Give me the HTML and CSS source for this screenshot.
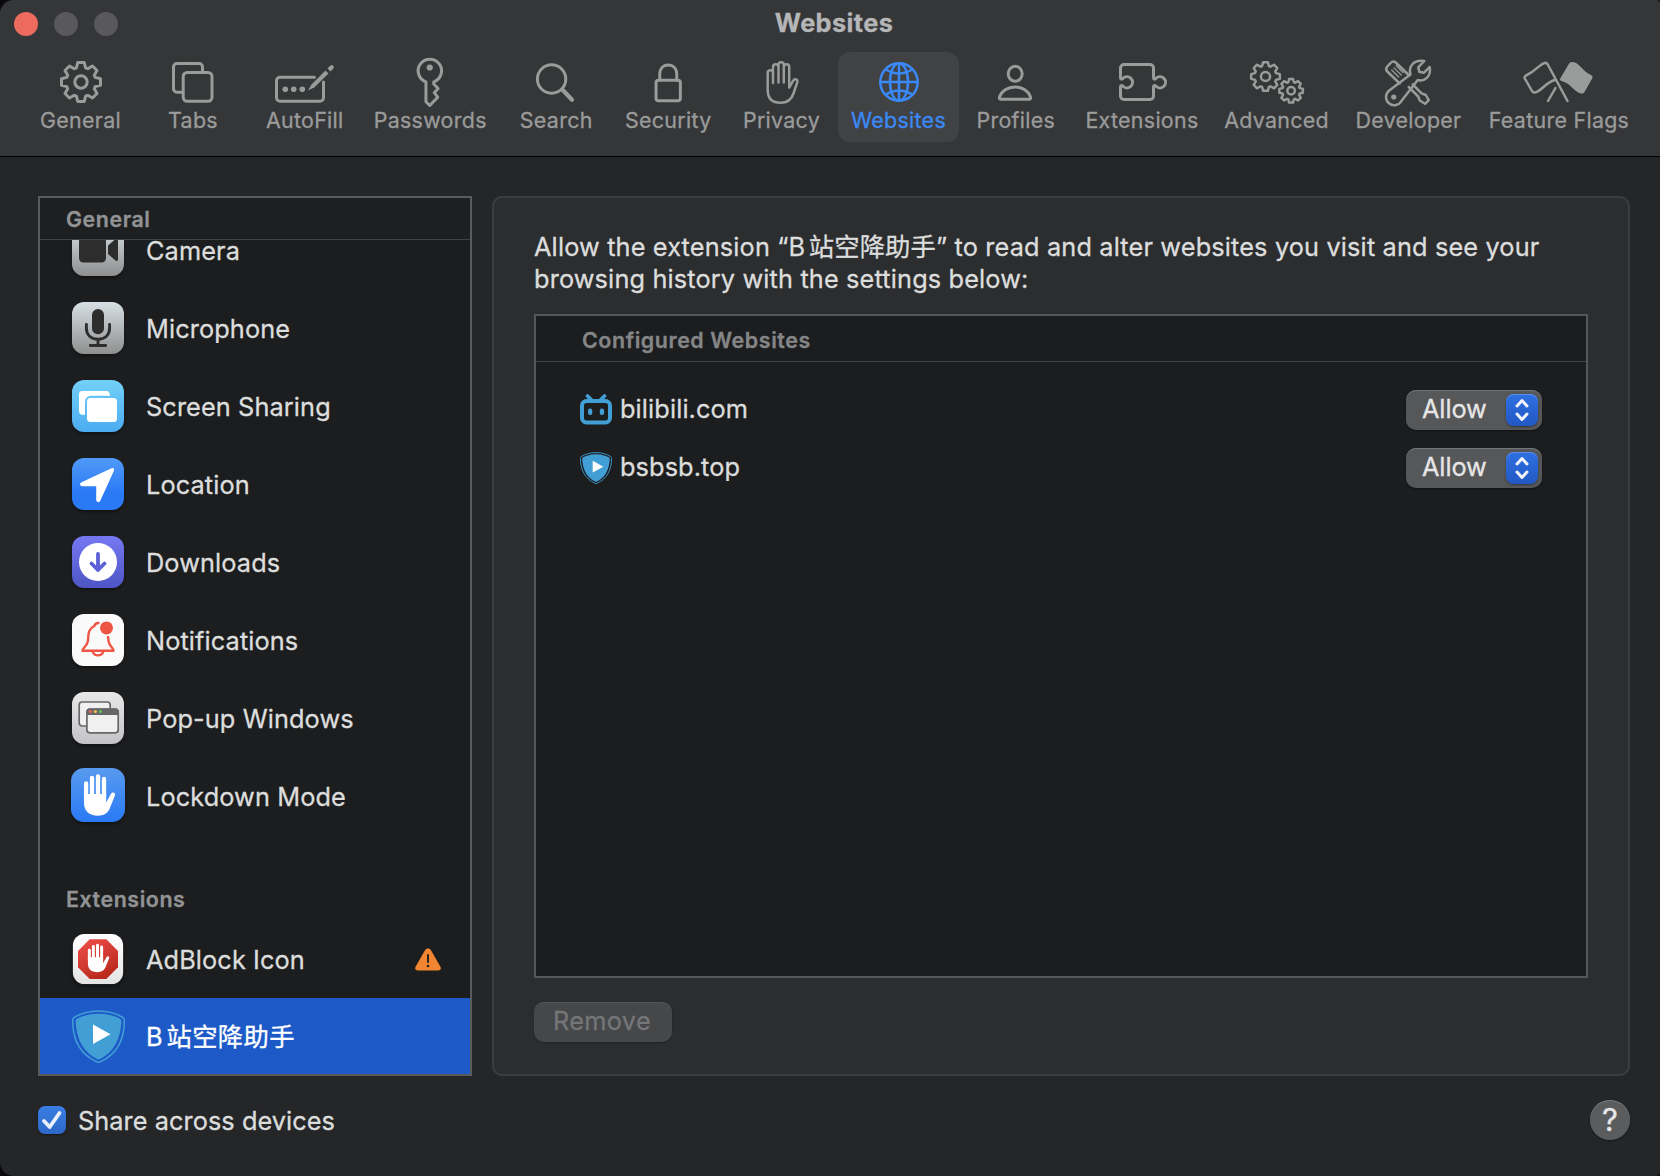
FILE: index.html
```
<!DOCTYPE html>
<html lang="en">
<head>
<meta charset="utf-8">
<title>Websites</title>
<link rel="stylesheet" href="styles.css">
</head>
<body>
<svg class="defs" width="0" height="0" aria-hidden="true">
  <symbol id="gear" viewBox="-22 -22 44 44" overflow="visible">
    <path vector-effect="non-scaling-stroke" d="M-4.6-14.2L-3.2-19.5H3.2L4.6-14.2L6.8-13.3L11.5-16L16-11.5L13.3-6.8L14.2-4.6L19.5-3.2V3.2L14.2 4.6L13.3 6.8L16 11.5L11.5 16L6.8 13.3L4.6 14.2L3.2 19.5H-3.2L-4.6 14.2L-6.8 13.3L-11.5 16L-16 11.5L-13.3 6.8L-14.2 4.6L-19.5 3.2V-3.2L-14.2-4.6L-13.3-6.8L-16-11.5L-11.5-16L-6.8-13.3Z"/>
    <circle vector-effect="non-scaling-stroke" r="6.2"/>
  </symbol>
  <symbol id="shield" viewBox="0 0 53 53">
    <path d="M26.5 1C36 1 44.5 3.600 51 7.500Q52.500 8.500 52.300 11C52.300 30 44 44.500 28.500 51.700Q26.500 52.700 24.500 51.700C9 44.500.700 30 .700 11Q.500 8.500 2 7.500C8.500 3.600 17 1 26.500 1Z" fill="none" stroke="#429fd5" stroke-width="1.500"/>
    <path d="M26.500 3.700C35.500 3.700 43 6 48 8.800Q49.500 9.800 49.300 12C48.500 30 41 42.500 28 49Q26.500 49.700 25 49C12 42.500 4.500 30 3.700 12Q3.500 9.800 5 8.800C10 6 17.500 3.700 26.500 3.700Z" fill="#429fd5"/>
    <path d="M21 14.500V34L38.500 24.300Z" fill="#fff"/>
  </symbol>
  <symbol id="hand" viewBox="0 0 54 54">
    <g stroke="#fff" stroke-width="4.300" stroke-linecap="round" fill="none">
      <path d="M15.100 15.500V30M21 10V30M27 8.300V30M33 11V30"/>
    </g>
    <path d="M13 26H35.200V34.500L40 25.800C41.200 23.500 44.800 24.400 44 27.200L38.500 41C36.500 45.500 32.500 47.700 27 47.700C18 47.700 13 43 13 35Z" fill="#fff"/>
  </symbol>
</svg>

<div class="window">
  <header class="toolbar">
    <div class="titlebar">
      <div class="lights"><i class="light close"></i><i class="light"></i><i class="light"></i></div>
      <h1>Websites</h1>
    </div>
    <nav class="tabs">
      <a class="tab"><svg viewBox="43 56 76 50"><use href="#gear" x="59" y="60" width="44" height="44"/></svg><span>General</span></a>
      <a class="tab"><svg viewBox="155 56 76 50"><path d="M181.500 92.200H177a3.500 3.500 0 0 1-3.500-3.500V67a3.500 3.500 0 0 1 3.500-3.500h22a3.500 3.500 0 0 1 3.500 3.500v4"/><rect x="183.200" y="72.500" width="28.800" height="28.800" rx="4"/></svg><span>Tabs</span></a>
      <a class="tab"><svg viewBox="267 56 76 50"><path d="M314.500 77.300H280a3.500 3.500 0 0 0-3.500 3.500v17a3.500 3.500 0 0 0 3.500 3.500h40a3.500 3.500 0 0 0 3.500-3.500V82"/><g class="solid"><circle cx="285.300" cy="89.300" r="2.800"/><circle cx="293.700" cy="89.300" r="2.800"/><circle cx="302.300" cy="89.300" r="2.800"/><path d="M308 90.500L311.500 84.500L325.500 70.500L328.500 73.500L314.500 87.200Z"/><path d="M327.500 68.500L330.200 65.800a2.100 2.100 0 0 1 3 3L330.500 71.500Z"/></g></svg><span>AutoFill</span></a>
      <a class="tab"><svg viewBox="392.250 56 76 50"><path d="M426.200 81.900A11.700 11.700 0 1 1 434 81.900V84L438.400 88.500L434.500 92.700L438 97.200L430 105.500L426.200 101.700Z"/><circle class="solid" cx="430" cy="67.500" r="3.100"/></svg><span>Passwords</span></a>
      <a class="tab"><svg viewBox="518 56 76 50"><circle cx="551.600" cy="79" r="14.200"/><path d="M562.500 89.800L572 99.800" stroke-width="4.200"/></svg><span>Search</span></a>
      <a class="tab"><svg viewBox="630.250 56 76 50"><rect x="656.300" y="80.200" width="24.300" height="20.500" rx="2.500"/><path d="M660 80V74.500C660 68.500 663.500 65 668.500 65S677 68.500 677 74.500V80"/></svg><span>Security</span></a>
      <a class="tab"><svg viewBox="743.500 56 76 50"><path class="fine" d="M772.500 83V73A2.650 2.650 0 0 0 767.200 73V90C767.200 98 771.500 102.800 780 102.800C787 102.800 791 99.500 793 93.500L796.800 82.200C797.800 79 794 78.300 792.500 81L788.700 87.500V67A2.700 2.700 0 0 0 783.300 67V82.500M783.300 67V64.800A2.650 2.650 0 0 0 778 64.800V82.500M778 67A2.750 2.750 0 0 0 772.500 67V74"/></svg><span>Privacy</span></a>
      <a class="tab selected"><svg viewBox="860.700 56 76 50"><g class="fine"><circle cx="898.700" cy="82" r="18.700"/><ellipse cx="898.700" cy="82" rx="9" ry="18.700"/><path d="M898.700 63.300V100.700M880 82H917.400M885.500 69.500Q898.700 77.500 911.900 69.500M885.500 94.500Q898.700 86.500 911.900 94.500"/></g></svg><span>Websites</span></a>
      <a class="tab"><svg viewBox="978 56 76 50"><ellipse cx="1015.200" cy="73.800" rx="7" ry="7.500"/><path d="M1000.500 99.300H1029.500Q1031 99.300 1030.500 97C1028.500 91 1022.500 87 1015 87S1001.500 91 999.500 97Q999 99.300 1000.500 99.300Z"/></svg><span>Profiles</span></a>
      <a class="tab"><svg viewBox="1104 56 76 50"><path d="M1124 64.500H1150a3.500 3.500 0 0 1 3.500 3.500V77.500C1153.500 79.500 1155 79.500 1156 78.300A5.600 5.600 0 1 1 1156 86.300C1155 85 1153.500 85 1153.500 87V96a3.500 3.500 0 0 1-3.500 3.500H1124a3.500 3.500 0 0 1-3.500-3.500V87C1120.500 85 1122 85 1123 86.300A5.600 5.600 0 1 0 1123 78.300C1122 79.500 1120.500 79.500 1120.500 77.500V68a3.500 3.500 0 0 1 3.500-3.500Z"/></svg><span>Extensions</span></a>
      <a class="tab"><svg class="fine" viewBox="1238.500 56 76 50"><use href="#gear" x="1248.800" y="60.300" width="32.400" height="32.400"/><use href="#gear" x="1277.300" y="77.500" width="26.600" height="26.600"/></svg><span>Advanced</span></a>
      <a class="tab"><svg class="fine" viewBox="1370.750 56 76 50"><path d="M1399.500 83.500L1387 71.500Q1384.800 69 1387 66.500L1390.500 62.800Q1393 60.500 1395.500 62.500L1409 75.500"/><path class="hair" d="M1391.500 70L1398.500 77M1393.700 67.900L1401 75M1396 65.800L1402.700 72.500"/><path d="M1408.500 87L1418 96.500L1419.500 100.500L1424.800 103.800L1428.500 100.200L1425.500 95L1421.300 93.300L1412.500 84.500"/><path d="M1410.200 74.500C1408 66.500 1413.500 59 1424 61L1418 67.300L1419 71.800L1423.500 72.800L1429.500 67C1431.300 76.500 1424 82 1417.500 80L1401.300 100.700A8.200 8.200 0 1 1 1389 90.500Z"/><circle class="solid" cx="1393.500" cy="97" r="2.600"/></svg><span>Developer</span></a>
      <a class="tab"><svg class="fine" viewBox="1521 56 76 50"><path d="M1567.500 101L1547.500 64Q1546.500 62.500 1544.500 63C1539 64.500 1537.500 70 1526 75.500Q1523.800 76.700 1525 78.800L1532 91Q1533 93 1535.500 92.300C1543 90 1545 82.500 1555.500 79.800M1555.500 88L1548 101"/><path class="solid" d="M1568.800 64Q1570 61.500 1573 62C1580.500 63.500 1581.500 71 1591.500 75.300Q1593.400 76.300 1592.300 78.200L1584.500 92Q1583.500 94 1581 93.500C1573 91.500 1571.500 83.500 1561.500 81Q1559 80.300 1560.200 78.500Z"/></svg><span>Feature Flags</span></a>
    </nav>
  </header>

  <main class="content">
    <aside class="sidebar">
      <h2 class="side-title pinned">General</h2>
      <ul class="rows clipped">
        <li class="row"><svg class="icon metal" viewBox="0 0 52 52"><rect x="7" y="13" width="27" height="25.500" rx="4.500" fill="#2d2d2d"/><path d="M36 21.500L43.500 15Q46 13.500 46 16.500V35Q46 38 43.500 36.500L36 30Z" fill="#2d2d2d"/></svg><span>Camera</span></li>
        <li class="row"><svg class="icon metal" viewBox="0 0 52 52"><rect x="20" y="7" width="12" height="25.300" rx="6" fill="#2d2d2d"/><path d="M14.400 22.500V26C14.400 33 19 37.300 26 37.300S37.600 33 37.600 26V22.500M26 37.300V43.500M18.300 43.500H33.700" fill="none" stroke="#2d2d2d" stroke-width="2.900" stroke-linecap="round"/></svg><span>Microphone</span></li>
        <li class="row"><svg class="icon sky" viewBox="0 0 52 52"><path d="M10 11H35Q37.800 11.500 38 15.800H19Q13.200 16 13 22V34.800H10.500Q7 34.500 7 31V14.500Q7 11.300 10 11Z" fill="#fff"/><rect x="15" y="18" width="30" height="24" rx="3.500" fill="#fff"/></svg><span>Screen Sharing</span></li>
        <li class="row"><svg class="icon blue" viewBox="0 0 52 52"><path d="M39.500 10.300Q42.800 9.300 42 12.500L28.300 42.800Q27.300 44.600 25.700 44Q24.200 43.500 24.200 42V28.200H10Q8.300 28 8 26.500Q7.900 25 9.500 24.200Z" fill="#fff"/></svg><span>Location</span></li>
        <li class="row"><svg class="icon purple" viewBox="0 0 52 52"><circle cx="26" cy="26" r="19" fill="#fff"/><path d="M26 18V34M19.500 27.500L26 34L32.500 27.500" fill="none" stroke="#5b5fd8" stroke-width="3.800" stroke-linecap="round" stroke-linejoin="round"/></svg><span>Downloads</span></li>
        <li class="row"><svg class="icon white" viewBox="0 0 52 52"><g fill="none" stroke="#ee5545" stroke-width="2.400" stroke-linejoin="round"><path d="M27.500 9.200Q23.700 8.300 22.300 12C15 15.500 16.800 22 15.800 27.500C15 32 10.500 34 10.500 36.800H41.500C41.500 34 37.500 32 36.600 27.500Q36.200 25 36 22"/><path d="M20.700 37.500A5.500 5.300 0 0 0 31.300 37.500"/></g><circle cx="34.500" cy="13.900" r="6.500" fill="#ee5545"/></svg><span>Notifications</span></li>
        <li class="row"><svg class="icon silver" viewBox="0 0 52 52"><rect x="7.200" y="10" width="31" height="24" rx="3" fill="#f0f0f0" stroke="#666769" stroke-width="1.700"/><rect x="14.900" y="17" width="31.300" height="23.800" rx="3" fill="#f0f0f0" stroke="#666769" stroke-width="1.700"/><path d="M14.500 23V19.500Q14.500 16.500 17.500 16.500H43.500Q46.500 16.500 46.500 19.500V23Z" fill="#666769"/><circle cx="18.300" cy="19.500" r="1.600" fill="#ec6457"/><circle cx="23.400" cy="19.500" r="1.600" fill="#f4bd4f"/><circle cx="28.500" cy="19.500" r="1.600" fill="#5fc454"/></svg><span>Pop-up Windows</span></li>
        <li class="row"><svg class="icon azure large"><use href="#hand" width="54" height="54"/></svg><span>Lockdown Mode</span></li>
      </ul>
      <h2 class="side-title">Extensions</h2>
      <ul class="rows">
        <li class="row"><svg class="icon adblock" viewBox="0 0 52 52"><defs><linearGradient id="red" x2=".5" y2="1"><stop offset="0" stop-color="#f04f4b"/><stop offset="1" stop-color="#bb2a1d"/></linearGradient><linearGradient id="paper" x2="0" y2="1"><stop stop-color="#fff"/><stop offset="1" stop-color="#e4e4e4"/></linearGradient></defs><rect x=".900" y=".900" width="50.200" height="50.200" rx="11.500" fill="url(#paper)"/><path d="M17.700 6.200H34.300L46 17.900V34.300L34.300 46H17.700L6 34.300V17.900Z" fill="url(#red)"/><use href="#hand" x="7" y="6.500" width="37" height="37"/></svg><span>AdBlock Icon</span><svg class="warn" viewBox="0 0 26 23"><path d="M10.300 1.800Q13-1.500 15.700 1.800L25.300 18.500Q27 22.400 23 22.600H3Q-1 22.400.700 18.500Z" fill="#f18532"/><path d="M13 7V14" stroke="#26221f" stroke-width="2" stroke-linecap="round"/><circle cx="13" cy="18" r="1.300" fill="#26221f"/></svg></li>
        <li class="row active"><svg class="icon bare"><use href="#shield" width="53" height="53"/></svg><span><span class="latin">B</span>站空降助手</span></li>
      </ul>
    </aside>

    <section class="panel">
      <p class="lead">Allow the extension “<span class="latin">B</span>站空降助手” to read and alter websites you visit and see your<br>browsing history with the settings below:</p>
      <div class="table">
        <h2 class="table-title">Configured Websites</h2>
        <div class="site">
          <svg class="favicon" viewBox="0 0 32 32"><rect x="2" y="7" width="28" height="21.500" rx="4.500" fill="none" stroke="#429fd5" stroke-width="4"/><path d="M7.500 2L11.500 6M24.500 2L20.500 6" stroke="#429fd5" stroke-width="3.600" stroke-linecap="round"/><rect x="8" y="14.500" width="4.300" height="6.500" rx="2" fill="#429fd5"/><rect x="19.800" y="14.500" width="4.300" height="6.500" rx="2" fill="#429fd5"/></svg>
          <span class="host">bilibili.com</span>
          <button class="popup"><span>Allow</span><svg viewBox="0 0 26 32"><path d="M8 12L13 6.500L18 12M8 20L13 25.500L18 20"/></svg></button>
        </div>
        <div class="site">
          <svg class="favicon" viewBox="0 0 32 32"><use href="#shield" width="32" height="32"/></svg>
          <span class="host">bsbsb.top</span>
          <button class="popup"><span>Allow</span><svg viewBox="0 0 26 32"><path d="M8 12L13 6.500L18 12M8 20L13 25.500L18 20"/></svg></button>
        </div>
      </div>
      <button class="remove" disabled>Remove</button>
    </section>
  </main>

  <footer class="bottom">
    <label class="share"><svg class="check" viewBox="0 0 28 28"><path d="M6 15L11.700 21L21.500 7"/></svg><span>Share across devices</span></label>
    <button class="help">?</button>
  </footer>
</div>
</body>
</html>
```
FILE: styles.css
```
* { box-sizing: border-box; }

body {
  margin: 0;
  background: #0b090d;
  font-family: Inter, "Noto Sans CJK SC", sans-serif;
  font-size: 25.3px;
  letter-spacing: 0.11px;
  color: #dcdddd;
  -webkit-text-stroke: 0.3px currentColor;
}

h1, h2, p, ul { margin: 0; padding: 0; }
ul { list-style: none; }

button {
  border: 0;
  padding: 0;
  font: inherit;
  letter-spacing: inherit;
  color: inherit;
}

.defs { position: absolute; }

.window {
  display: flex;
  flex-direction: column;
  width: 1660px;
  height: 1176px;
  overflow: hidden;
  border-radius: 14px 4px 4px 14px;
  background: #252627;
}

/* Toolbar */
.toolbar {
  flex: none;
  height: 157px;
  background: #353638;
  border-bottom: 1px solid #000;
}

.titlebar {
  display: grid;
  grid-template-columns: 118px 1fr 110px;
  align-items: center;
  height: 52px;
}

.lights { display: flex; gap: 16px; padding: 0 0 4px 14px; }
.light { width: 24px; height: 24px; border-radius: 50%; background: #59595b; }
.light.close { background: #ed6a5e; }

h1 {
  padding-bottom: 6px;
  text-align: center;
  font-size: 25.3px;
  font-weight: 700;
  line-height: 30px;
  letter-spacing: 0.4px;
  color: #b5b6b7;
}

.tabs {
  display: grid;
  grid-template-columns: 111px 114px 109.5px 141.5px 110.5px 113.5px 113px 121px 113.5px 139px 130px 134px 167px;
  padding-left: 25px;
}

.tab {
  display: flex;
  flex-direction: column;
  align-items: center;
  height: 90px;
  padding-top: 4px;
  border-radius: 12px;
  font-size: 21.4px;
  line-height: 28px;
  letter-spacing: 0.3px;
  color: #9a9b9b;
  white-space: nowrap;
}

.tab svg {
  width: 76px;
  height: 50px;
  overflow: visible;
  fill: none;
  stroke: currentColor;
  stroke-width: 3;
  stroke-linecap: round;
  stroke-linejoin: round;
}

.tab .fine, .tab svg.fine { stroke-width: 2.5; }
.tab .hair { stroke-width: 1.3; }
.tab .solid { fill: currentColor; stroke: none; }
.tab.selected { background: #414244; color: #3a89f7; }

/* Main area */
.content {
  display: grid;
  grid-template-columns: 434px 1138px;
  gap: 20px;
  height: 880px;
  margin: 39px 0 0 38px;
}

.sidebar {
  overflow: hidden;
  border: 2px solid #5a5b5d;
  background: #1c1d1f;
}

.side-title {
  height: 85px;
  padding: 50px 0 0 26px;
  font-size: 21.4px;
  font-weight: 600;
  line-height: 28px;
  letter-spacing: 0.56px;
  color: #929394;
}

.side-title.pinned {
  height: 42px;
  padding-top: 7px;
  border-bottom: 1px solid #414244;
  background: #1e1f21;
}

.rows.clipped {
  display: flex;
  flex-direction: column;
  justify-content: flex-end;
  height: 595px;
  overflow: hidden;
}

.row {
  flex: none;
  display: flex;
  align-items: center;
  height: 78px;
  padding: 0 29px 0 32px;
}

.row > span { flex: 1; margin-left: 22px; padding-top: 2px; line-height: 32px; }
.row.active { height: 76px; background: #1d5ac8; color: #fff; letter-spacing: 0.4px; }
.latin { margin-right: 3.5px; }

.icon {
  width: 52px;
  height: 52px;
  border-radius: 12px;
  box-shadow: 0 2px 3px rgba(0, 0, 0, 0.35);
}

.icon.large { width: 54px; height: 54px; margin: -2px -1px 0; border-radius: 13px; }
.icon.metal { background: linear-gradient(#d7e0e5, #8f8f8f); }
.icon.sky { background: linear-gradient(#73d0f8, #4bacf1); }
.icon.blue { background: linear-gradient(#4f9af8, #2a79f5 70%); }
.icon.purple { background: linear-gradient(#7678f2, #4d56c4); }
.icon.white { background: #fafafa; }
.icon.silver { background: linear-gradient(#e8e8e9, #c3c3c6); }
.icon.azure { background: linear-gradient(#589aee, #2a7af5); }
.icon.bare { width: 53px; height: 53px; margin-right: -1px; border-radius: 0; box-shadow: none; }
.warn { width: 26px; height: 23px; }

/* Permissions panel */
.panel {
  padding: 33px 40px 0;
  border: 2px solid #3c3d3f;
  border-radius: 10px;
  background: #2c2d2f;
}

.lead { line-height: 32px; letter-spacing: 0.15px; white-space: nowrap; }

.table {
  height: 664px;
  margin-top: 19px;
  border: 2px solid #555658;
  background: #1c1d1f;
}

.table-title {
  height: 46px;
  margin-bottom: 19px;
  padding: 10px 0 0 46px;
  border-bottom: 1px solid #414244;
  font-size: 21.4px;
  font-weight: 600;
  line-height: 28px;
  letter-spacing: 0.59px;
  color: #858687;
}

.site {
  display: flex;
  align-items: center;
  height: 58px;
  padding: 0 44px;
}

.favicon { width: 32px; height: 32px; }
.host { flex: 1; margin-left: 8px; padding-bottom: 2px; line-height: 32px; }

.popup {
  display: flex;
  align-items: center;
  justify-content: space-between;
  width: 136px;
  height: 40px;
  padding: 0 4px 0 16px;
  border-radius: 10px;
  background: #565759;
  box-shadow: inset 0 1px 0 #747577, 0 1px 2px rgba(0, 0, 0, 0.4);
  color: #e6e6e7;
  line-height: 36px;
}

.popup span { margin-top: -2px; letter-spacing: -0.1px; }

.popup svg {
  width: 32px;
  height: 32px;
  border-radius: 8px;
  background: linear-gradient(#2f70e2, #2258c4);
  box-shadow: inset 0 1px 0 #5b8eea, 0 1px 2px rgba(0, 0, 0, 0.4);
  fill: none;
  stroke: #f0f3fb;
  stroke-width: 3;
  stroke-linecap: round;
  stroke-linejoin: round;
}

.remove {
  width: 138px;
  height: 40px;
  margin-top: 24px;
  padding: 0 2px 3px 0;
  border-radius: 10px;
  background: #464749;
  box-shadow: inset 0 1px 0 #525355, 0 1px 2px rgba(0, 0, 0, 0.25);
  color: #757678;
  letter-spacing: 0.35px;
}

/* Footer */
.bottom {
  display: flex;
  align-items: center;
  justify-content: space-between;
  height: 40px;
  margin: 24px 30px 0 38px;
}

.share { display: flex; align-items: center; line-height: 32px; }
.share span { margin-left: 12px; padding-top: 1px; letter-spacing: 0.06px; }

.check {
  width: 28px;
  height: 28px;
  border-radius: 7px;
  background: linear-gradient(#3a7ee4, #2c68c6);
  box-shadow: 0 1px 2px rgba(0, 0, 0, 0.4);
  fill: none;
  stroke: #e9f0fb;
  stroke-width: 3.8;
  stroke-linecap: round;
  stroke-linejoin: round;
}

.help {
  width: 40px;
  height: 40px;
  border-radius: 50%;
  background: #5b5c5e;
  box-shadow: inset 0 1px 0 #77787a, 0 1px 2px rgba(0, 0, 0, 0.4);
  color: #e6e6e7;
  font-size: 31px;
  line-height: 40px;
}
```
